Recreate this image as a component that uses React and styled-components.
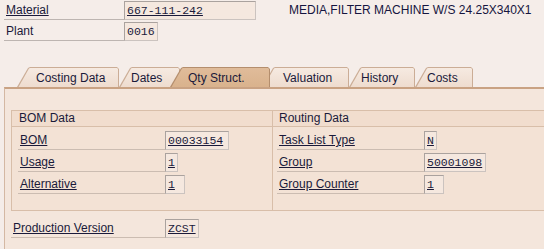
import React from "react"
import styled, { createGlobalStyle } from "styled-components"

const GlobalStyle = createGlobalStyle`
  html, body {
    margin: 0;
    padding: 0;
    background: #f5ede9;
    overflow: hidden;
  }
  body {
    font-family: "Liberation Sans", Arial, sans-serif;
    font-size: 12px;
    color: #1a1a3a;
  }
`

const Screen = styled.div`
  width: 544px;
  height: 249px;
  overflow: hidden;
  background: #f5ede9;
  display: flex;
  flex-direction: column;
`

const Header = styled.div`
  display: flex;
  flex-direction: column;
  gap: 2px;
  padding: 1px 0 0 4px;
`

const Row = styled.div`
  display: flex;
  height: 19px;
`

const Label = styled.div`
  width: ${(p) => p.$w}px;
  flex: none;
  box-sizing: border-box;
  border-bottom: 1px solid ${(p) => p.$line || "#bdb5b1"};
  padding-left: 2px;
  line-height: 18px;
  white-space: nowrap;
  text-decoration: ${(p) => (p.$u ? "underline" : "none")};
`

const Field = styled.div`
  width: ${(p) => p.$w}px;
  flex: none;
  height: 19px;
  box-sizing: border-box;
  border: 1px solid #aaa29e;
  border-right-color: #cbc3bf;
  border-bottom-color: #cbc3bf;
  background: #f5e8df;
  font-family: "Liberation Mono", "Courier New", monospace;
  font-size: 11.5px;
  line-height: 17px;
  padding-left: 2px;
  white-space: nowrap;
  overflow: hidden;
  text-decoration: ${(p) => (p.$u ? "underline" : "none")};
`

const Description = styled.div`
  margin-left: 33px;
  line-height: 19px;
  white-space: nowrap;
  color: #151540;
`

const TabStrip = styled.div`
  display: flex;
  margin-top: 26px;
  padding-left: 17px;
  height: 20px;
`

const Tab = styled.div`
  position: relative;
  z-index: ${(p) => (p.$active ? 20 : p.$z)};
  flex: none;
  width: ${(p) => p.$w}px;
  height: 20px;
  margin-left: ${(p) => p.$ml || 0}px;
  padding-left: ${(p) => p.$pad}px;
  box-sizing: border-box;
  line-height: 22px;
  white-space: nowrap;
  background: ${(p) => (p.$active ? "#b48e6d" : "#cbad96")};
  clip-path: polygon(0 100%, 11px 1px, 13px 0, calc(100% - 2px) 0, 100% 2px, 100% 100%);

  &::before {
    content: "";
    position: absolute;
    inset: 1px 1px 0 1px;
    z-index: -1;
    background: ${(p) =>
      p.$active
        ? "linear-gradient(#e0bc9a, #d9b28d)"
        : "linear-gradient(#f6eae1, #eedccf)"};
    clip-path: polygon(0.5px 100%, 11px 0.5px, 12px 0, calc(100% - 1px) 0, 100% 1px, 100% 100%);
  }
`

const Panel = styled.div`
  flex: 1;
  margin-left: 4px;
  background: #f4e6dc;
  border-top: 2px solid #c9a283;
  border-left: 1px solid #d4b8a3;
  padding: 21px 0 0 6px;
`

const GroupBox = styled.div`
  display: grid;
  grid-template-columns: 260px 1fr;
  width: 560px;
  border: 1px solid #d8bea9;
  background: #f3e2d5;
`

const Column = styled.div`
  display: flex;
  flex-direction: column;
  border-left: ${(p) => (p.$divider ? "1px solid #d8bea9" : "none")};
`

const ColumnTitle = styled.div`
  height: 15px;
  line-height: 15px;
  padding-left: ${(p) => p.$pad}px;
  background: #f1ddce;
  border-bottom: 1px solid #d8bea9;
  white-space: nowrap;
`

const ColumnBody = styled.div`
  display: flex;
  flex-direction: column;
  gap: 3px;
  padding: 4px 0 16px ${(p) => p.$pad}px;
`

const Footer = styled.div`
  margin-top: 8px;
`

const tabs = [
  { label: "Costing Data", w: 102, pad: 19 },
  { label: "Dates", w: 61, pad: 12 },
  { label: "Qty Struct.", w: 100, pad: 18, ml: -10, active: true },
  { label: "Valuation", w: 87, pad: 21, ml: -8 },
  { label: "History", w: 66, pad: 12 },
  { label: "Costs", w: 58, pad: 12 },
]

const bomRows = [
  { label: "BOM", value: "00033154", w: 64 },
  { label: "Usage", value: "1", w: 13 },
  { label: "Alternative", value: "1", w: 20 },
]

const routingRows = [
  { label: "Task List Type", value: "N", w: 13 },
  { label: "Group", value: "50001098", w: 62 },
  { label: "Group Counter", value: "1", w: 20 },
]

const FieldRow = ({ label, value, w }) => (
  <Row>
    <Label $w={147} $u $line="#cbbcb1">
      {label}
    </Label>
    <Field $w={w} $u>
      {value}
    </Field>
  </Row>
)

export default function App() {
  return (
    <Screen>
      <GlobalStyle />
      <Header>
        <Row>
          <Label $w={120} $u>
            Material
          </Label>
          <Field $w={132} $u>
            667-111-242
          </Field>
          <Description>MEDIA,FILTER MACHINE W/S 24.25X340X1</Description>
        </Row>
        <Row>
          <Label $w={120}>Plant</Label>
          <Field $w={34}>0016</Field>
        </Row>
      </Header>

      <TabStrip>
        {tabs.map((t, i) => (
          <Tab
            key={t.label}
            $w={t.w}
            $pad={t.pad}
            $ml={t.ml}
            $z={i + 1}
            $active={t.active}
          >
            {t.label}
          </Tab>
        ))}
      </TabStrip>

      <Panel>
        <GroupBox>
          <Column>
            <ColumnTitle $pad={7}>BOM Data</ColumnTitle>
            <ColumnBody $pad={6}>
              {bomRows.map((r) => (
                <FieldRow key={r.label} {...r} />
              ))}
            </ColumnBody>
          </Column>
          <Column $divider>
            <ColumnTitle $pad={6}>Routing Data</ColumnTitle>
            <ColumnBody $pad={4}>
              {routingRows.map((r) => (
                <FieldRow key={r.label} {...r} />
              ))}
            </ColumnBody>
          </Column>
        </GroupBox>

        <Footer>
          <Row>
            <Label $w={154} $u $line="#cbbcb1">
              Production Version
            </Label>
            <Field $w={34} $u>
              ZCST
            </Field>
          </Row>
        </Footer>
      </Panel>
    </Screen>
  )
}
